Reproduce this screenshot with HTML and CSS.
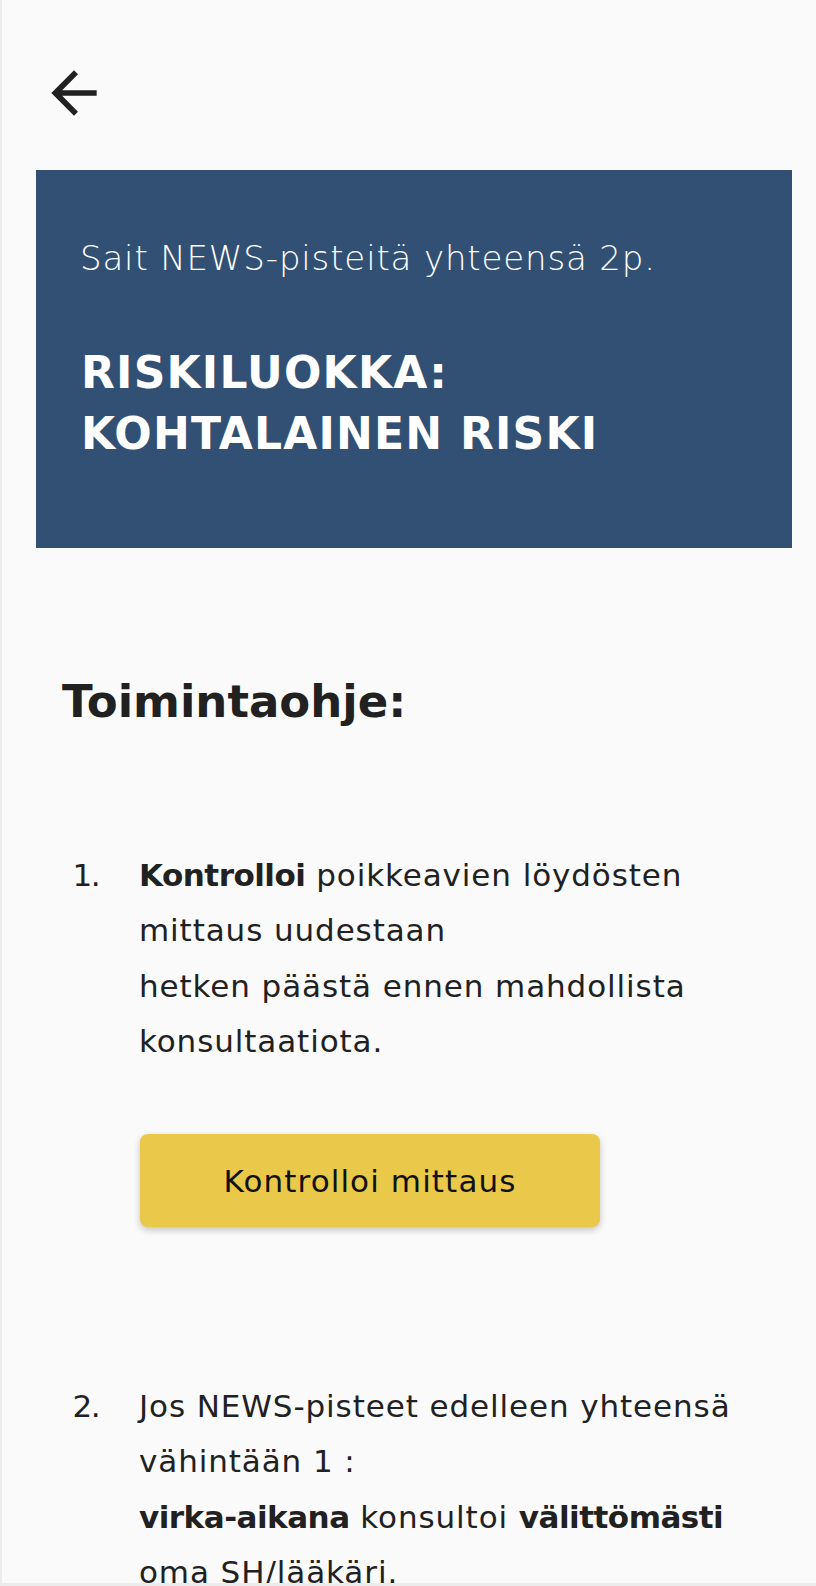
FILE: index.html
```html
<!DOCTYPE html>
<html lang="fi">
<head>
<meta charset="utf-8">
<title>NEWS – Riskiluokka</title>
<link rel="stylesheet" href="styles.css">
</head>
<body>
<div class="page">
  <header class="topbar">
    <button class="back" aria-label="Takaisin">
      <svg class="back-icon" viewBox="0 0 24 24" aria-hidden="true">
        <path d="M20 11H7.83l5.59-5.59L12 4l-8 8 8 8 1.41-1.41L7.83 13H20v-2z"/>
      </svg>
    </button>
  </header>

  <section class="result">
    <p class="result-score">Sait NEWS-pisteitä yhteensä 2p.</p>
    <h1 class="result-title">RISKILUOKKA:<br>KOHTALAINEN RISKI</h1>
  </section>

  <h2 class="instructions-title">Toimintaohje:</h2>

  <ol class="steps">
    <li class="step">
      <div class="step-body">
        <p class="step-text"><strong>Kontrolloi</strong> poikkeavien löydösten mittaus uudestaan<br>hetken päästä ennen mahdollista konsultaatiota.</p>
        <button class="action">Kontrolloi mittaus</button>
      </div>
    </li>
    <li class="step step-second">
      <div class="step-body">
        <p class="step-text">Jos NEWS-pisteet edelleen yhteensä vähintään 1 :<br><strong>virka-aikana</strong> konsultoi <strong>välittömästi</strong> oma SH/lääkäri.</p>
      </div>
    </li>
  </ol>
</div>
</body>
</html>
```

FILE: styles.css
```css
* {
  box-sizing: border-box;
}

html, body {
  margin: 0;
  padding: 0;
  background: #fafafa;
}

body {
  font-family: "DejaVu Sans", "Liberation Sans", sans-serif;
  color: #212121;
}

.page {
  width: 816px;
  height: 1586px;
  overflow: hidden;
  border-left: 2px solid #ececec;
  border-bottom: 3px solid #ececec;
  padding-top: 59px;
}

.topbar {
  display: flex;
  padding-left: 38px;
  height: 68px;
}

.back {
  border: 0;
  background: none;
  padding: 0;
  margin: 0;
  width: 68px;
  height: 68px;
  cursor: pointer;
}

.back-icon {
  display: block;
  width: 68px;
  height: 68px;
  fill: #212121;
}

.result {
  margin: 43px 0 0 34px;
  width: 756px;
  background: #325074;
  color: #ffffff;
  padding: 66px 40px 84px 44px;
}

.result-score {
  margin: 0;
  font-size: 34px;
  font-weight: 300;
  letter-spacing: 0.85px;
  line-height: 44px;
}

.result-title {
  margin: 62px 0 0 1px;
  font-size: 44px;
  font-weight: 700;
  letter-spacing: 1.2px;
  line-height: 61px;
}

.instructions-title {
  margin: 127px 0 0 60px;
  font-size: 45px;
  font-weight: 700;
  line-height: 53px;
}

.steps {
  list-style: none;
  counter-reset: step;
  margin: 119.5px 32px 0 57px;
  padding: 0;
}

.step {
  counter-increment: step;
  display: grid;
  grid-template-columns: 40px 1fr;
  column-gap: 40px;
  font-size: 31px;
  letter-spacing: 0.9px;
  line-height: 55.5px;
}

.step::before {
  content: counter(step) ".";
  text-align: right;
  letter-spacing: -1.5px;
}

.step-second {
  margin-top: 151.5px;
}

.step-text {
  margin: 0;
}

.step-text strong {
  font-weight: 700;
  letter-spacing: -0.5px;
}

.action {
  display: flex;
  align-items: center;
  justify-content: center;
  margin: 64.5px 0 0 1px;
  width: 460px;
  height: 93px;
  border: 0;
  border-radius: 8px;
  background: #e9c84a;
  color: #111111;
  font-family: inherit;
  font-size: 31px;
  letter-spacing: 1.1px;
  box-shadow: 0 3px 7px rgba(0, 0, 0, 0.22);
  cursor: pointer;
}
```
